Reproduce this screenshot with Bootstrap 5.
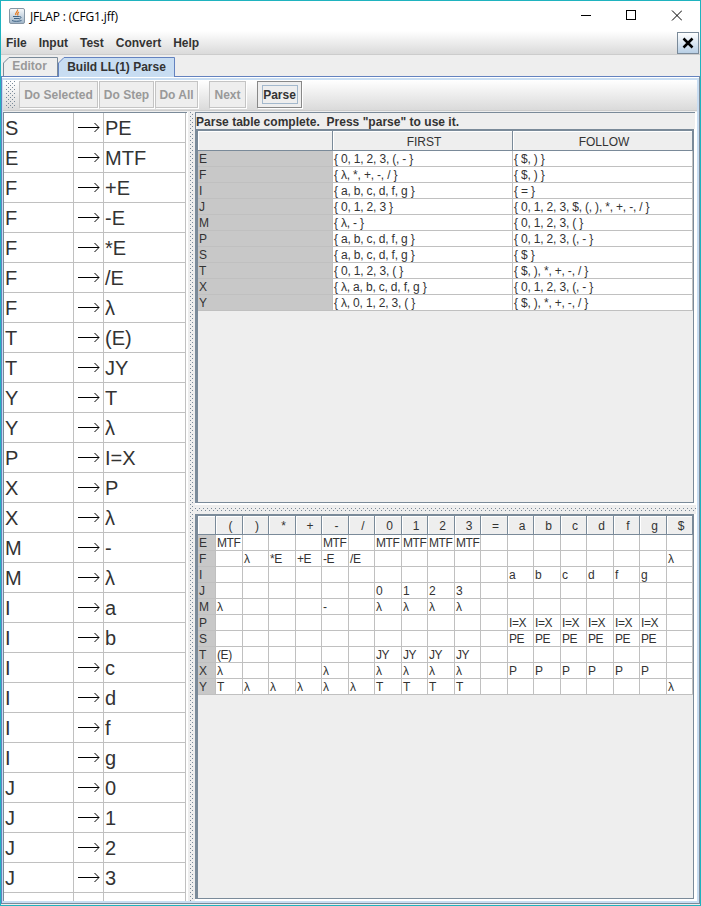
<!DOCTYPE html>
<html lang="en">
<head>
<meta charset="utf-8">
<meta name="viewport" content="width=device-width, initial-scale=1">
<title>JFLAP : (CFG1.jff)</title>
<link rel="stylesheet" href="https://cdn.jsdelivr.net/npm/bootstrap@5.3.0/dist/css/bootstrap.min.css">
<style>
:root{--edge:#7a8a99;--grid:#c0c0c0;--panel:#eee;--tab:#c8ddf2;--blue:#6382bf}
body{font:12px/15px "Liberation Sans",Arial,sans-serif;color:#333;background:#fff;overflow:hidden}
svg{display:block;flex:none}
.win{width:701px;height:906px;border:1px solid #1fb3bf;background:var(--panel)}
.titlebar{height:30px;background:#fff;color:#000;font:12px/15px "Open Sans","Noto Sans",sans-serif;letter-spacing:-.15px}
.controls{margin-right:18px}
.menus{height:24px;background:linear-gradient(#fff,#dadada);border-bottom:1px solid #ccc;font-weight:700;padding-left:5px}
.menus button{all:unset;margin-right:12px;padding-top:1px}
.menus .shut{box-sizing:border-box;width:22px;height:22px;padding:0;margin:0 1px 0 auto;border:1px solid var(--edge);background:linear-gradient(#fff,#b8cfe5);display:flex;align-items:center;justify-content:center}
.tabs{height:21px;padding:2px 0 0 2px;font-weight:700}
.tabs .one{width:55px;height:19px;position:relative;color:#999;line-height:18px;text-align:center;padding-right:2px}
.tabs .two{width:117px;height:20px;position:relative;line-height:20px;text-align:center}
.tabs span{position:relative}
.tabs svg{position:absolute;left:0;top:0}
.content-pane{height:828px;border:1px solid var(--edge);border-top-color:var(--blue);border-left-color:var(--blue);background:var(--tab);padding:3px 2px 2px 1px;box-shadow:inset 0 1px #fff}
.tools{height:32px;background:linear-gradient(#fff,#dadada 30px,#ccc 30px,#ccc 31px,#eee 31px);padding:1px 0 4px 3px}
.tools button{all:unset;box-sizing:border-box;height:27px;border:1px solid #c4c4c4;box-shadow:1px 1px #fff;background:#eee;color:#999;font-weight:700;text-align:center;margin-right:1px;line-height:27px;white-space:nowrap}
.tools .live{border-color:#888;background:#eee;color:#333;display:flex;align-items:center;justify-content:center}
.live i{font-style:normal;border:1px solid #a3b8cc;height:19px;line-height:18px;width:36px;text-align:center}
.work{height:789px;background:#fff}
table{border-collapse:separate;border-spacing:0;table-layout:fixed;background:#fff}
td,th{padding:0;font-weight:400;white-space:nowrap;overflow:visible}
td{border-right:1px solid var(--grid);border-bottom:1px solid var(--grid)}
.rules{width:184px;height:789px;border-left:1px solid var(--edge);border-top:1px solid var(--edge);overflow:hidden}
.rules table{width:182px}
.rules td{height:30px;font-size:20px;line-height:27px;padding:2px 0 0 1px}
.rules td:nth-child(2){padding:0 0 0 4px}
.split-v{width:8px;background:#eee;border-left:1px solid #fff;display:flex;padding-left:2px}
.dots-v{width:3px;height:100%}
.dots-h{height:3px;width:100%}
.dots-v,.dots-h,.grip{background-image:conic-gradient(at 1px 1px,transparent 75%,#7a8a99 0),conic-gradient(at 1px 1px,transparent 75%,#7a8a99 0);background-size:4px 4px;background-position:0 0,2px 2px}
.grip{width:10px;height:27px;margin-right:3px}
.right{width:500px}
.note{height:17px;background:#eee;border-top:1px solid var(--edge);border-left:1px solid var(--edge);font-weight:700;line-height:16px;padding-top:1px;letter-spacing:.02px;white-space:pre}
.pane{width:499px;border:solid var(--edge);border-width:2px 1px 1px 3px;background:#eee}
.pane-a{height:374px}
.pane-b{height:385px}
.split-h{height:11px;width:501px;background:#eee;padding-top:3px;border-top:2px solid #fff}
.pane th{background:#eee;text-align:center;border-right:1px solid var(--edge);border-bottom:1px solid var(--edge);box-shadow:inset 1px 1px #fff}
.pane td{height:16px;line-height:13px;padding:2px 0 0 1px}
.pane td:first-child{background:#c8c8c8}
.pane-a th{height:20px;line-height:16px;padding:3px 0 0 3px}
.pane-b th{height:19px;line-height:16px;padding:2px 0 0 3px}
.pane-a td{letter-spacing:-.18px}
.pane-b td{letter-spacing:-.4px}
</style>
<script src="https://cdn.jsdelivr.net/npm/bootstrap@5.3.0/dist/js/bootstrap.bundle.min.js"></script>
</head>
<body>
<div class="win d-flex flex-column">
<div class="titlebar d-flex align-items-center">
<svg class="ms-2 me-1" width="17" height="16" viewBox="0 0 17 16"><defs><linearGradient id="g" x2="0" y2="1"><stop stop-color="#f8fafc"/><stop offset="1" stop-color="#9eb4c8"/></linearGradient></defs><rect x=".5" y=".5" width="15" height="15" rx="1.5" fill="url(#g)" stroke="#8796a5"/><path d="M8.5 1.5c1 2-3 3-1.500 5.500M10 4c-2 1-1.500 2-1 3.500" fill="none" stroke="#e57a20" stroke-width="1.2"/><path d="M4 8.500h6.500M5 10.500h5M10.500 8.500c2.500 0 1.500 2-.5 2.500M3 12.500c2 1.200 7 1 9.500 0" fill="none" stroke="#3f6486"/></svg>
<span>JFLAP : (CFG1.jff)</span>
<svg class="ms-auto controls" width="101" height="12" viewBox="0 0 101 12" fill="none" stroke="#000" shape-rendering="crispEdges"><path d="M0 5.500h10M45.500 .5h9v9h-9z"/><path d="m91 .5 10 10m0-10-10 10" shape-rendering="auto"/></svg>
</div>
<div class="menus d-flex align-items-center"><button>File</button><button>Input</button><button>Test</button><button>Convert</button><button>Help</button><button class="shut" aria-label="Close"><svg width="12" height="12" viewBox="0 0 12 12" stroke="#000" stroke-width="2.500"><path d="m1.500 1.500 9 9m0-9-9 9"/></svg></button></div>
<div class="tabs d-flex">
<div class="one"><svg width="56" height="19" fill="none"><path d="M.5 19V6L6 .5h48.500V19" stroke="#7a8a99"/></svg><span>Editor</span></div>
<div class="two"><svg width="117" height="20"><path d="M.5 20V6L6 .5h110.500V20" fill="#c8ddf2" stroke="#6382bf"/></svg><span>Build LL(1) Parse</span></div>
</div>
<div class="content-pane">
<div class="tools d-flex align-items-center"><div class="grip"></div><button style="width:79px">Do Selected</button><button style="width:55px">Do Step</button><button class="me-0" style="width:43px">Do All</button><button style="width:37px;margin-left:11px">Next</button><button class="live" style="width:45px;margin-left:10px"><i>Parse</i></button></div>
<div class="work d-flex">
<div class="rules"><table><colgroup><col style="width:70px"><col style="width:30px"><col style="width:82px"></colgroup><tbody id="rules"></tbody></table></div>
<div class="split-v"><div class="dots-v"></div></div>
<div class="right">
<div class="note">Parse table complete.  Press "parse" to use it.</div>
<div class="pane pane-a"><table style="width:495px"><colgroup><col style="width:135px"><col style="width:180px"><col style="width:180px"></colgroup><thead><tr><th></th><th>FIRST</th><th>FOLLOW</th></tr></thead><tbody id="sets"></tbody></table></div>
<div class="split-h"><div class="dots-h"></div></div>
<div class="pane pane-b"><table style="width:495px" id="ll"></table></div>
</div>
</div>
</div>
</div>
<script>
const rules="S PE,E MTF,F +E,F -E,F *E,F /E,F λ,T (E),T JY,Y T,Y λ,P I=X,X P,X λ,M -,M λ,I a,I b,I c,I d,I f,I g,J 0,J 1,J 2,J 3".split(",");
const arrow='<svg width="22" height="11" fill="none" stroke="#000"><path d="M0 5.500h21" shape-rendering="crispEdges"/><path d="m16.500 1 4.500 4.500-4.500 4.500"/></svg>';
document.getElementById("rules").innerHTML=rules.map(r=>{const[a,b]=r.split(" ");return`<tr><td>${a}</td><td>${arrow}</td><td>${b}</td></tr>`}).join("")+"<tr><td></td><td></td><td></td></tr>";
const sets=[["E","0, 1, 2, 3, (, -","$, )"],["F","λ, *, +, -, /","$, )"],["I","a, b, c, d, f, g","="],["J","0, 1, 2, 3","0, 1, 2, 3, $, (, ), *, +, -, /"],["M","λ, -","0, 1, 2, 3, ("],["P","a, b, c, d, f, g","0, 1, 2, 3, (, -"],["S","a, b, c, d, f, g","$"],["T","0, 1, 2, 3, (","$, ), *, +, -, /"],["X","λ, a, b, c, d, f, g","0, 1, 2, 3, (, -"],["Y","λ, 0, 1, 2, 3, (","$, ), *, +, -, /"]];
document.getElementById("sets").innerHTML=sets.map(([v,a,b])=>`<tr><td>${v}</td><td>{ ${a} }</td><td>{ ${b} }</td></tr>`).join("");
const terms=[..."()*+-/0123=abcdfg$"];
const fill=(keys,v)=>Object.fromEntries([...keys].map(k=>[k,v]));
const own=keys=>Object.fromEntries([...keys].map(k=>[k,k]));
const ll={E:fill("(-0123","MTF"),F:{")":"λ","*":"*E","+":"+E","-":"-E","/":"/E","$":"λ"},I:own("abcdfg"),J:own("0123"),M:{...fill("(0123","λ"),"-":"-"},P:fill("abcdfg","I=X"),S:fill("abcdfg","PE"),T:{"(":"(E)",...fill("0123","JY")},X:{...fill("(-0123","λ"),...fill("abcdfg","P")},Y:{...fill("(0123","T"),...fill(")*+-/$","λ")}};
document.getElementById("ll").innerHTML='<colgroup><col style="width:18px">'+terms.map((t,i)=>`<col style="width:${i%2?26:27}px">`).join("")+"</colgroup><thead><tr><th></th>"+terms.map(t=>`<th>${t}</th>`).join("")+"</tr></thead><tbody>"+Object.entries(ll).map(([v,m])=>`<tr><td>${v}</td>${terms.map(t=>`<td>${m[t]||""}</td>`).join("")}</tr>`).join("")+"</tbody>";
</script>
</body>
</html>
